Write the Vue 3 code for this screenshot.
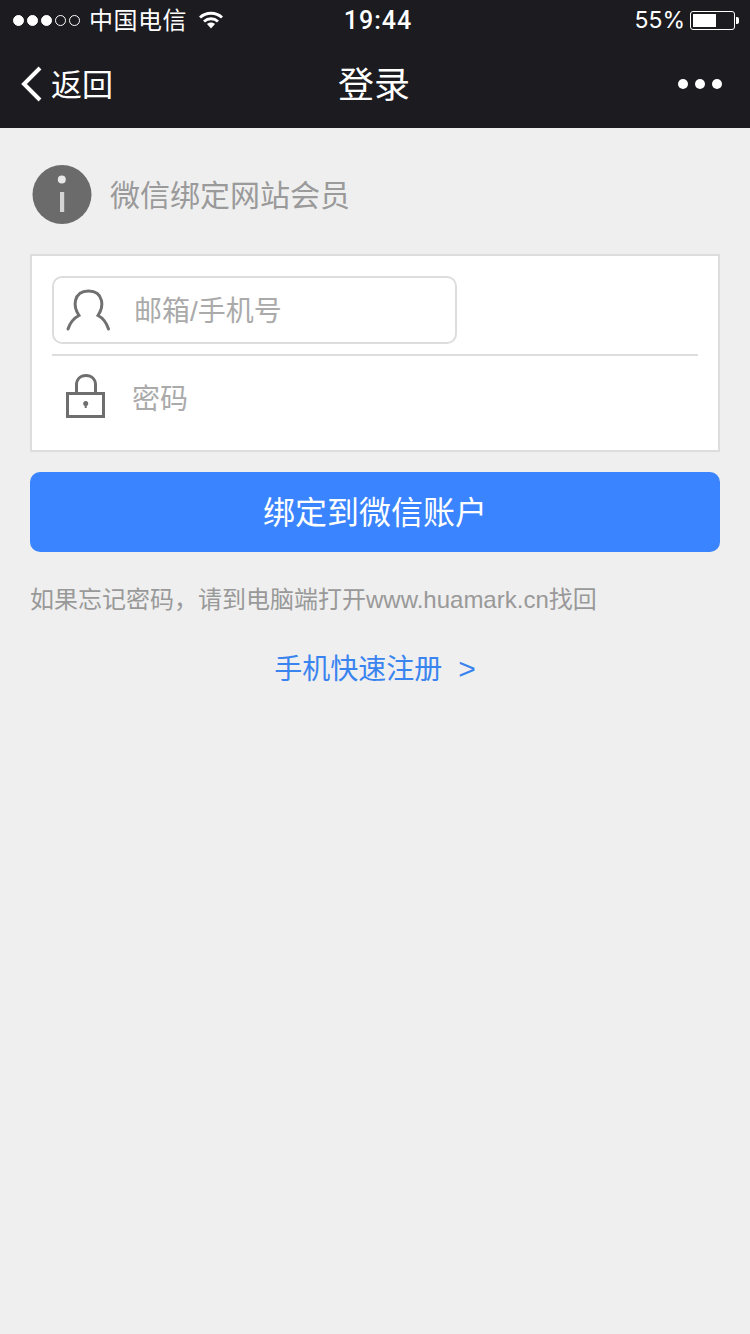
<script setup>
const signal = [1, 1, 1, 0, 0];
</script>

<template>
  <div class="page">
    <header class="top">
      <div class="status">
        <div class="status-left">
          <span class="dots">
            <i v-for="(on, i) in signal" :key="i" class="dot" :class="{ on }"></i>
          </span>
          <span class="carrier">中国电信</span>
          <svg class="wifi" width="24" height="18" viewBox="0 0 24 18">
            <path d="M1 6.500C7 .8 17 .8 23 6.500" fill="none" stroke="#fff" stroke-width="2.800" />
            <path d="M5 10.500C9 6.800 15 6.800 19 10.500" fill="none" stroke="#fff" stroke-width="2.800" />
            <path d="M8 13C10.400 11 13.600 11 16 13L12 17.500Z" fill="#fff" />
          </svg>
        </div>
        <div class="time">19:44</div>
        <div class="status-right">
          <span class="percent">55%</span>
          <span class="battery"><span class="battery-fill"></span></span>
          <span class="battery-tip"></span>
        </div>
      </div>
      <nav class="nav">
        <div class="back">
          <svg width="24" height="36" viewBox="0 0 24 36">
            <path d="M20 2L4 18L20 34" fill="none" stroke="#fff" stroke-width="4" />
          </svg>
          <span class="cjk">返回</span>
        </div>
        <div class="title">登录</div>
        <div class="more"><i></i><i></i><i></i></div>
      </nav>
    </header>

    <main class="content">
      <div class="intro">
        <svg width="62" height="62" viewBox="0 0 62 62">
          <circle cx="32" cy="30.500" r="29.500" fill="#6b6b6b" />
          <circle cx="31.800" cy="15.500" r="4" fill="#e8e8e8" />
          <rect x="30" y="28" width="4.200" height="20" fill="#d4d4d4" />
        </svg>
        <span class="cjk">微信绑定网站会员</span>
      </div>

      <div class="card">
        <div class="field">
          <svg width="46" height="44" viewBox="0 0 46 44">
            <path d="M2 41C4 35 8 30 13 27.500C10 23 8.500 17 9.500 12.500C11 6 16 3 22.500 3C29 3 34 6 35.500 12.500C36.500 17 35 23 32 27.500C37 30 40.500 35 42.500 41" fill="none" stroke="#707070" stroke-width="3" stroke-linecap="round" />
          </svg>
          <span class="placeholder cjk">邮箱/手机号</span>
        </div>
        <div class="divider"></div>
        <div class="field-plain">
          <svg width="40" height="46" viewBox="0 0 40 46">
            <path d="M10.500 19V11C10.500 5 14.500 1.500 20 1.500C25.500 1.500 29.500 5 29.500 11V19" fill="none" stroke="#6e6e6e" stroke-width="3" />
            <rect x="1.500" y="19.500" width="36" height="23" fill="none" stroke="#6e6e6e" stroke-width="3" />
            <circle cx="19.700" cy="29.500" r="2.500" fill="#6e6e6e" />
            <rect x="18.700" y="30" width="2" height="4" fill="#6e6e6e" />
          </svg>
          <span class="placeholder">密码</span>
        </div>
      </div>

      <button class="submit" type="button"><span class="cjk">绑定到微信账户</span></button>

      <p class="hint">如果忘记密码，请到电脑端打开www.huamark.cn找回</p>

      <a class="register">手机快速注册<span class="arrow">&gt;</span></a>
    </main>
  </div>
</template>

<style>
html,
body {
  margin: 0;
  background: #efefef;
}
</style>

<style scoped>
.page {
  width: 750px;
  height: 1334px;
  background: #efefef;
  font-family: "Liberation Sans", "Noto Sans CJK SC", sans-serif;
  overflow: hidden;
}
.top {
  height: 128px;
  background: #1b1b20;
  color: #fff;
}
.cjk {
  display: block;
  padding-bottom: 4px;
}
.status {
  height: 40px;
  display: flex;
  align-items: center;
  justify-content: space-between;
  position: relative;
  padding: 0 11px 0 13px;
  box-sizing: border-box;
}
.status-left,
.status-right {
  display: flex;
  align-items: center;
}
.dots {
  display: flex;
  gap: 3px;
  margin-right: 9px;
}
.dot {
  width: 11px;
  height: 11px;
  box-sizing: border-box;
  border: 1px solid #fff;
  border-radius: 50%;
}
.dot.on {
  background: #fff;
}
.carrier {
  font-size: 24px;
  letter-spacing: 0.5px;
  padding-bottom: 4px;
  margin-right: 12px;
}
.time {
  position: absolute;
  left: 6px;
  right: 0;
  text-align: center;
  font-family: Roboto, sans-serif;
  font-weight: 500;
  font-size: 25px;
  letter-spacing: 1px;
}
.percent {
  font-family: Inter, sans-serif;
  font-size: 23px;
  margin-right: 5px;
}
.battery {
  width: 45px;
  height: 19px;
  box-sizing: border-box;
  border: 1px solid #fff;
  border-radius: 3px;
  padding: 2px;
  display: flex;
}
.battery-fill {
  width: 23px;
  background: #fff;
}
.battery-tip {
  width: 3px;
  height: 7px;
  margin-left: 1px;
  background: #fff;
  border-radius: 0 2px 2px 0;
}
.nav {
  height: 88px;
  display: flex;
  align-items: center;
  justify-content: space-between;
  position: relative;
  padding: 0 28px 0 20px;
}
.back {
  display: flex;
  align-items: center;
  gap: 7px;
  font-size: 31px;
}
.title {
  position: absolute;
  left: 0;
  right: 2px;
  text-align: center;
  font-size: 36px;
  padding-bottom: 4px;
}
.more {
  display: flex;
  gap: 7px;
}
.more i {
  width: 10px;
  height: 10px;
  border-radius: 50%;
  background: #fff;
}
.content {
  padding: 36px 30px 0;
}
.intro {
  display: flex;
  align-items: center;
  gap: 18px;
  font-size: 30px;
  color: #9a9a9a;
  height: 62px;
}
.card {
  margin-top: 28px;
  height: 198px;
  box-sizing: border-box;
  background: #fff;
  border: 2px solid #ddd;
  padding: 20px 20px 0;
}
.field {
  width: 405px;
  height: 68px;
  box-sizing: border-box;
  border: 2px solid #ddd;
  border-radius: 10px;
  display: flex;
  align-items: center;
  padding-left: 12px;
  gap: 22px;
}
.field .placeholder {
  padding-bottom: 2px;
}
.divider {
  height: 2px;
  background: #ddd;
  margin-top: 10px;
}
.field-plain {
  display: flex;
  align-items: center;
  padding: 18px 0 0 14px;
  gap: 26px;
}
.placeholder {
  font-size: 28px;
  color: #aaa;
}
.submit {
  display: block;
  width: 690px;
  height: 80px;
  margin-top: 20px;
  border: 0;
  border-radius: 10px;
  background: #3a84ff;
  color: #fff;
  font-family: inherit;
  font-size: 32px;
}
.hint {
  margin: 33px 0 0;
  font-size: 24px;
  line-height: 30px;
  color: #999;
}
.register {
  display: block;
  margin-top: 36px;
  text-align: center;
  font-size: 28px;
  line-height: 36px;
  color: #3a84f0;
}
.arrow {
  margin-left: 16px;
  font-size: 30px;
}
</style>
